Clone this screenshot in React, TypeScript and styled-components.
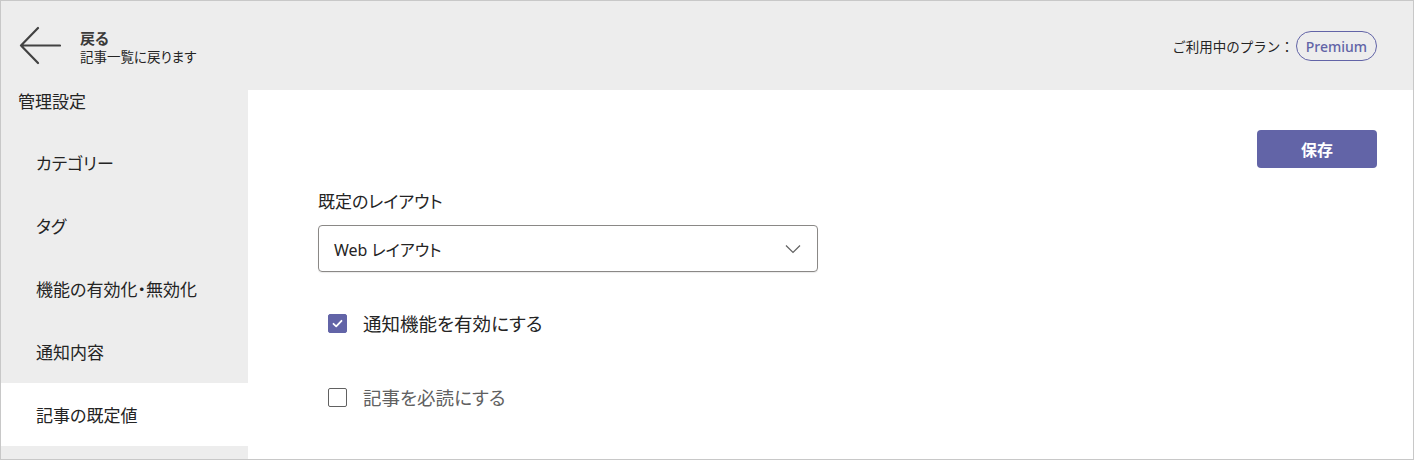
import styled, { createGlobalStyle } from 'styled-components';

const GlobalStyle = createGlobalStyle`
  html, body {
    margin: 0;
    padding: 0;
    background: #ffffff;
  }
  body {
    font-family: "Noto Sans", "Noto Sans CJK JP", sans-serif;
    font-feature-settings: "palt";
    color: #242424;
  }
`;

const Frame = styled.div`
  width: 1414px;
  height: 460px;
  box-sizing: border-box;
  border: 1px solid #c8c8c8;
  display: flex;
  flex-direction: column;
  background: #ededed;
  overflow: hidden;
`;

const Header = styled.header`
  height: 89px;
  flex-shrink: 0;
  display: flex;
  align-items: center;
  justify-content: space-between;
  padding: 0 36px 0 16px;
`;

const BackLink = styled.div`
  display: flex;
  align-items: center;
  gap: 19px;
  cursor: pointer;
`;

const BackTexts = styled.div`
  display: flex;
  flex-direction: column;
  margin-top: 2px;
`;

const BackTitle = styled.span`
  font-size: 15px;
  font-weight: 700;
  line-height: 20px;
  color: #3b3a39;
`;

const BackSub = styled.span`
  font-size: 13.5px;
  line-height: 18px;
  color: #242424;
`;

const PlanInfo = styled.div`
  display: flex;
  align-items: center;
  gap: 2px;
  font-size: 13.5px;
  margin-top: 1px;
  font-feature-settings: normal;
`;

const PlanBadge = styled.span`
  display: inline-flex;
  align-items: center;
  height: 28px;
  padding: 0 9px;
  border: 1px solid #6264a7;
  border-radius: 15px;
  color: #6264a7;
  font-size: 14px;
  font-weight: 500;
`;

const Body = styled.div`
  flex: 1;
  display: flex;
  min-height: 0;
`;

const Sidebar = styled.nav`
  width: 247px;
  flex-shrink: 0;
  display: flex;
  flex-direction: column;
`;

const SidebarTitle = styled.div`
  height: 41px;
  padding: 0 0 0 17px;
  box-sizing: border-box;
  font-size: 17px;
  line-height: 24px;
`;

const NavItem = styled.div<{ $active?: boolean }>`
  height: 63px;
  display: flex;
  align-items: center;
  padding-left: 35px;
  font-size: 17px;
  background: ${(p) => (p.$active ? '#ffffff' : 'transparent')};
  cursor: pointer;
`;

const Main = styled.main`
  flex: 1;
  background: #ffffff;
  padding: 40px 36px 0 70px;
  display: flex;
  flex-direction: column;
`;

const Toolbar = styled.div`
  display: flex;
  justify-content: flex-end;
`;

const SaveButton = styled.button`
  width: 120px;
  height: 38px;
  border: none;
  border-radius: 4px;
  background: #6264a7;
  color: #ffffff;
  font-family: inherit;
  font-size: 16px;
  font-weight: 700;
  cursor: pointer;
`;

const FieldLabel = styled.label`
  margin-top: 22px;
  font-size: 17px;
  line-height: 24px;
`;

const Select = styled.div`
  margin-top: 11px;
  width: 500px;
  height: 47px;
  box-sizing: border-box;
  border: 1px solid #8a8886;
  border-radius: 4px;
  box-shadow: 0 1px 1px rgba(0, 0, 0, 0.08);
  display: flex;
  align-items: center;
  justify-content: space-between;
  padding: 0 16px 0 15px;
  font-size: 16px;
`;

const CheckRow = styled.label<{ $muted?: boolean }>`
  display: flex;
  align-items: center;
  gap: 16px;
  height: 24px;
  padding-left: 10px;
  font-size: 18.5px;
  color: ${(p) => (p.$muted ? '#616161' : '#242424')};
  cursor: pointer;
`;

const FirstCheck = styled(CheckRow)`
  margin-top: 39px;
`;

const SecondCheck = styled(CheckRow)`
  margin-top: 50px;
`;

const Box = styled.span<{ $checked?: boolean }>`
  width: 19px;
  height: 19px;
  box-sizing: border-box;
  border-radius: 2px;
  border: 1px solid ${(p) => (p.$checked ? '#6264a7' : '#616161')};
  background: ${(p) => (p.$checked ? '#6264a7' : '#ffffff')};
  display: inline-flex;
  align-items: center;
  justify-content: center;
`;

function BackArrow() {
  return (
    <svg width="44" height="40" viewBox="0 0 44 40" fill="none">
      <path
        d="M43 19.5H4M21 2L4 19.5L21 37"
        stroke="#424242"
        strokeWidth="2.2"
        strokeLinecap="round"
        strokeLinejoin="round"
      />
    </svg>
  );
}

function Chevron() {
  return (
    <svg width="16" height="10" viewBox="0 0 16 10" fill="none">
      <path d="M1 1.5L8 8.5L15 1.5" stroke="#616161" strokeWidth="1.2" />
    </svg>
  );
}

function CheckMark() {
  return (
    <svg width="11" height="9" viewBox="0 0 11 9" fill="none">
      <path
        d="M1.5 4.8L4.2 7.3L9.5 1.8"
        stroke="#ffffff"
        strokeWidth="1.8"
        strokeLinecap="round"
        strokeLinejoin="round"
      />
    </svg>
  );
}

const navItems = ['カテゴリー', 'タグ', '機能の有効化・無効化', '通知内容', '記事の既定値'];

export default function App() {
  return (
    <>
      <GlobalStyle />
      <Frame>
        <Header>
          <BackLink>
            <BackArrow />
            <BackTexts>
              <BackTitle>戻る</BackTitle>
              <BackSub>記事一覧に戻ります</BackSub>
            </BackTexts>
          </BackLink>
          <PlanInfo>
            ご利用中のプラン：
            <PlanBadge>Premium</PlanBadge>
          </PlanInfo>
        </Header>
        <Body>
          <Sidebar>
            <SidebarTitle>管理設定</SidebarTitle>
            {navItems.map((item) => (
              <NavItem key={item} $active={item === '記事の既定値'}>
                {item}
              </NavItem>
            ))}
          </Sidebar>
          <Main>
            <Toolbar>
              <SaveButton>保存</SaveButton>
            </Toolbar>
            <FieldLabel>既定のレイアウト</FieldLabel>
            <Select>
              <span>Web レイアウト</span>
              <Chevron />
            </Select>
            <FirstCheck>
              <Box $checked>
                <CheckMark />
              </Box>
              通知機能を有効にする
            </FirstCheck>
            <SecondCheck $muted>
              <Box />
              記事を必読にする
            </SecondCheck>
          </Main>
        </Body>
      </Frame>
    </>
  );
}
